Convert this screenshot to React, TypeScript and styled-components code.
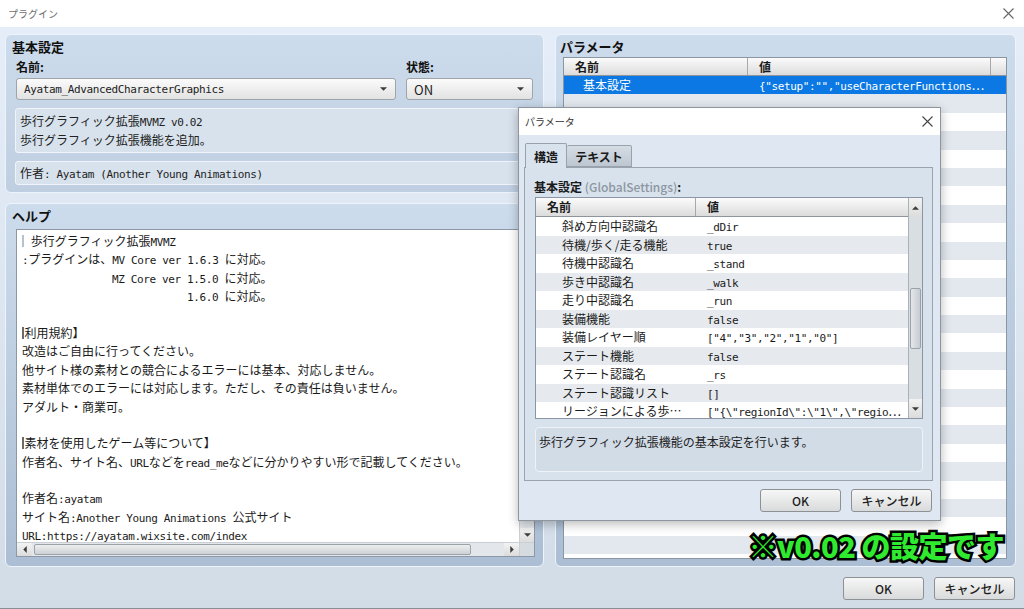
import React from "react";
import styled, { createGlobalStyle } from "styled-components";

const GlobalStyle = createGlobalStyle`
  html, body {
    margin: 0;
    padding: 0;
  }
  body {
    width: 1024px;
    height: 609px;
    overflow: hidden;
    font-family: "Noto Sans CJK JP", "Noto Sans", sans-serif;
    font-size: 12px;
    color: #1e1e1e;
  }
  * {
    box-sizing: border-box;
  }
`;

const Window = styled.div`
  position: relative;
  width: 1024px;
  height: 609px;
  display: flex;
  flex-direction: column;
  background: #fff;
  border-bottom: 1px solid #8a8f96;
`;

const TitleBar = styled.div`
  height: 27px;
  flex: none;
  display: flex;
  align-items: center;
  justify-content: space-between;
  padding: 0 10px 0 8px;
  background: #fff;
`;

const WinTitle = styled.span`
  font-size: 10px;
  color: #707070;
`;

const Body = styled.div`
  flex: 1;
  display: flex;
  flex-direction: column;
  padding: 7px 8px 0 5px;
  background: linear-gradient(180deg, #e5eef8 0%, #d2dce7 100%);
`;

const Columns = styled.div`
  height: 533px;
  display: grid;
  grid-template-columns: 539px 1fr;
  column-gap: 11px;
`;

const LeftCol = styled.div`
  display: flex;
  flex-direction: column;
  gap: 10px;
  min-height: 0;
`;

const Panel = styled.section<{ $grow?: boolean; $pad: string }>`
  position: relative;
  display: flex;
  flex-direction: column;
  min-height: 0;
  flex: ${(p) => (p.$grow ? "1" : "none")};
  padding: ${(p) => p.$pad};
  border: 1px solid #edf3fa;
  border-radius: 6px;
  background: linear-gradient(180deg, #cddcec 0%, ${(p) => (p.$grow ? "#abbed4" : "#bfcfe1")} 100%);
`;

const PanelTitle = styled.h2<{ $shift?: number }>`
  margin: 4px 0 0 ${(p) => p.$shift ?? 0}px;
  font-size: 13px;
  line-height: 16px;
  font-weight: 700;
  color: #111;
`;

const Fields = styled.div`
  display: grid;
  grid-template-columns: 380px 127px;
  column-gap: 10px;
  margin-top: 5px;
  padding-left: 1px;
`;

const Field = styled.div`
  display: flex;
  flex-direction: column;
  gap: 4px;
`;

const Label = styled.label`
  font-weight: 700;
  line-height: 14px;
  color: #111;
`;

const Select = styled.div`
  height: 22px;
  display: flex;
  align-items: center;
  justify-content: space-between;
  padding: 0 8px 0 7px;
  border: 1px solid #9ea4aa;
  border-radius: 3px;
  background: linear-gradient(180deg, #fbfbfb 0%, #e2e2e2 100%);
  font-size: 13px;
  color: #222;
  white-space: nowrap;
`;

const InfoBox = styled.div<{ $h: number }>`
  height: ${(p) => p.$h}px;
  margin-top: 8px;
  padding: 3px 4px;
  border: 1px solid #eef4fa;
  border-radius: 3px;
  background: #d8e2ed;
  line-height: 17px;
  color: #222;
  white-space: nowrap;
  overflow: hidden;
`;

const AuthorLine = styled.div`
  line-height: 16px;
`;

const Latin = styled.span`
  font-family: "DejaVu Sans Mono", "Liberation Mono", monospace;
  font-size: 11px;
  letter-spacing: -0.37px;
  white-space: pre;
`;

const Mixed = ({ text }: { text: string }) => {
  const parts = text.split(/([\x20-\x7e]+)/);
  return (
    <>
      {parts.map((p, i) => (i % 2 === 1 ? <Latin key={i}>{p}</Latin> : p))}
    </>
  );
};

/* ---------- help text area ---------- */

const TextArea = styled.div`
  flex: 1;
  margin-top: 5px;
  display: grid;
  grid-template-columns: 1fr 15px;
  grid-template-rows: 1fr 14px;
  border: 1px solid #8c98a5;
  min-height: 0;
`;

const TextContent = styled.div`
  background: #fff;
  padding: 2px 0 0 5px;
  overflow: hidden;
`;

const HelpLine = styled.div<{ $indent?: number }>`
  height: 18.4px;
  line-height: 18.4px;
  padding-left: ${(p) => p.$indent ?? 0}px;
  white-space: nowrap;
  color: #1a1a1a;
`;

const ClipMark = styled.span<{ $light?: boolean }>`
  display: inline-block;
  width: 1.5px;
  height: 12px;
  margin-right: 1px;
  vertical-align: -1px;
  background: ${(p) => (p.$light ? "#b6c2ce" : "#6a6a6a")};
`;

const VScroll = styled.div`
  display: flex;
  flex-direction: column;
  justify-content: space-between;
  background: #e3e7eb;
  border-left: 1px solid #c9cfd5;
`;

const HScroll = styled.div`
  display: flex;
  align-items: stretch;
  background: #e3e7eb;
  border-top: 1px solid #c9cfd5;
`;

const ScrollBtn = styled.div<{ $h?: number; $w?: number }>`
  flex: none;
  width: ${(p) => (p.$w ? `${p.$w}px` : "auto")};
  height: ${(p) => (p.$h ? `${p.$h}px` : "auto")};
  display: flex;
  align-items: center;
  justify-content: center;
  background: linear-gradient(180deg, #f3f3f3, #dcdcdc);
`;

const HThumb = styled.div`
  width: 437px;
  margin: 1px 0 1px 2px;
  border: 1px solid #9aa2aa;
  border-radius: 2px;
  background: linear-gradient(180deg, #eeeeee, #cdd1d5);
`;

const Spacer = styled.div`
  flex: 1;
`;

const Corner = styled.div`
  background: #d6dbe0;
  border-left: 1px solid #c9cfd5;
  border-top: 1px solid #c9cfd5;
`;

/* ---------- parameter list ---------- */

const ParamTable = styled.div`
  flex: 1;
  margin-top: 2px;
  border: 1px solid #8a96a2;
  background: #fff;
  overflow: hidden;
`;

const ParamRow = styled.div<{ $head?: boolean; $sel?: boolean; $alt?: boolean }>`
  display: grid;
  grid-template-columns: 184px 243px 1fr;
  height: ${(p) => (p.$head ? "18px" : "18.4px")};
  line-height: ${(p) => (p.$head ? "17px" : "18.4px")};
  background: ${(p) =>
    p.$head
      ? "linear-gradient(180deg, #fbfbfb 0%, #dcdcdc 100%)"
      : p.$sel
      ? "#0b78e3"
      : p.$alt
      ? "#e2e8ee"
      : "#fff"};
  color: ${(p) => (p.$sel ? "#fff" : "#1a1a1a")};
  border-bottom: ${(p) => (p.$head ? "1px solid #8d949b" : "none")};
  white-space: nowrap;
  overflow: hidden;
`;

const Cell = styled.div<{ $pad: number; $head?: boolean; $last?: boolean }>`
  padding-left: ${(p) => p.$pad}px;
  overflow: hidden;
  font-weight: ${(p) => (p.$head ? 700 : 400)};
  border-right: ${(p) => (p.$head && !p.$last ? "1px solid #a3a9af" : "none")};
`;

const Stamp = styled.div`
  position: absolute;
  right: 11px;
  bottom: 4px;
  font-size: 29px;
  line-height: 34px;
  font-weight: 900;
  letter-spacing: -0.5px;
  color: #30ea30;
  -webkit-text-stroke: 5px #000;
  paint-order: stroke fill;
  white-space: nowrap;
`;

/* ---------- footer & buttons ---------- */

const Footer = styled.div`
  display: flex;
  justify-content: flex-end;
  gap: 10px;
  padding: 10px 1px 0 0;
`;

const Button = styled.button`
  width: 81px;
  height: 23px;
  padding: 0;
  border: 1px solid #8e9194;
  border-radius: 3px;
  background: linear-gradient(180deg, #f7f7f7 0%, #d9dadb 100%);
  font-family: inherit;
  font-size: 12px;
  font-weight: 500;
  color: #1e1e1e;
`;

/* ---------- dialog ---------- */

const Dialog = styled.div`
  position: absolute;
  left: 518px;
  top: 107px;
  width: 423px;
  display: flex;
  flex-direction: column;
  background: #dfe8f2;
  border: 1px solid #8d959e;
  box-shadow: 0 3px 10px rgba(0, 0, 0, 0.28);
`;

const DialogTitle = styled.div`
  height: 27px;
  display: flex;
  align-items: center;
  justify-content: space-between;
  padding: 0 7px 0 6px;
  background: #fff;
  font-size: 10px;
  color: #333;
`;

const DialogBody = styled.div`
  padding: 8px 7px 8px 5px;
  display: flex;
  flex-direction: column;
`;

const TabRow = styled.div`
  display: flex;
  align-items: flex-end;
  padding-left: 1px;
  height: 24px;
  position: relative;
  z-index: 1;
`;

const Tab = styled.div<{ $active?: boolean }>`
  width: ${(p) => (p.$active ? "42px" : "65px")};
  height: ${(p) => (p.$active ? "25px" : "22px")};
  margin-bottom: ${(p) => (p.$active ? "-1px" : "0")};
  display: flex;
  align-items: center;
  justify-content: center;
  border: 1px solid #98a2ac;
  border-bottom: ${(p) => (p.$active ? "none" : "1px solid #98a2ac")};
  border-left: ${(p) => (p.$active ? "1px solid #98a2ac" : "none")};
  border-radius: 2px 2px 0 0;
  background: ${(p) => (p.$active ? "#d9e3ed" : "linear-gradient(180deg, #d5dce4 0%, #bec7d1 100%)")};
  font-weight: 700;
  font-size: 12px;
  color: #1a1a1a;
`;

const TabPanel = styled.div`
  display: flex;
  flex-direction: column;
  padding: 12px 9px 8px 10px;
  border: 1px solid #9aa4ae;
  background: #d8e2ec;
`;

const GroupLabel = styled.div`
  margin-left: -1px;
  font-weight: 700;
  line-height: 14px;
  color: #1a1a1a;
`;

const Hint = styled.span`
  color: #8c97a2;
  font-weight: 500;
`;

const DTable = styled.div`
  height: 222px;
  margin-top: 3px;
  display: flex;
  border: 1px solid #8a96a2;
  background: #fff;
`;

const DGrid = styled.div`
  flex: 1;
  overflow: hidden;
`;

const DRow = styled.div<{ $head?: boolean; $alt?: boolean }>`
  display: grid;
  grid-template-columns: 160px 1fr;
  height: ${(p) => (p.$head ? "19px" : "18.5px")};
  line-height: ${(p) => (p.$head ? "18px" : "18.5px")};
  background: ${(p) =>
    p.$head ? "linear-gradient(180deg, #fbfbfb 0%, #dcdcdc 100%)" : p.$alt ? "#e6eaee" : "#fff"};
  border-bottom: ${(p) => (p.$head ? "1px solid #8d949b" : "none")};
  white-space: nowrap;
  color: #1a1a1a;
`;

const DScroll = styled.div`
  width: 14px;
  display: flex;
  flex-direction: column;
  border-left: 1px solid #a9b1b9;
  background: #d9dee3;
`;

const DThumb = styled.div`
  height: 61px;
  margin: 71px 1px 0;
  border: 1px solid #9aa2aa;
  border-radius: 2px;
  background: linear-gradient(90deg, #e4e7ea, #c6ccd2);
`;

const DescBox = styled.div`
  height: 45px;
  margin-top: 8px;
  padding: 6px 3px;
  border: 1px solid #eef3f8;
  border-radius: 4px;
  background: #d2dce7;
  line-height: 16px;
  color: #222;
`;

const DialogButtons = styled.div`
  display: flex;
  justify-content: flex-end;
  gap: 10px;
  margin-top: 8px;
  padding-right: 1px;
`;

/* ---------- icons ---------- */

const CloseIcon = ({ color = "#555" }: { color?: string }) => (
  <svg width="11" height="11" viewBox="0 0 11 11">
    <path d="M0.5 0.5 L10.5 10.5 M10.5 0.5 L0.5 10.5" stroke={color} strokeWidth="1.1" fill="none" />
  </svg>
);

const Tri = ({ dir, color = "#3c3c3c" }: { dir: "up" | "down" | "left" | "right"; color?: string }) => {
  const vertical = dir === "up" || dir === "down";
  const pts = {
    down: "0,0 7,0 3.5,3.5",
    up: "0,3.5 7,3.5 3.5,0",
    left: "3.5,0 3.5,7 0,3.5",
    right: "0,0 0,7 3.5,3.5",
  }[dir];
  return (
    <svg width={vertical ? 7 : 4} height={vertical ? 4 : 7} viewBox={vertical ? "0 0 7 3.5" : "0 0 3.5 7"}>
      <polygon points={pts} fill={color} />
    </svg>
  );
};

/* ---------- data ---------- */

type HelpItem = { text: string; indent?: number; mark?: "light" | "dark" };

const helpLines: HelpItem[] = [
  { text: " 歩行グラフィック拡張MVMZ", mark: "light" },
  { text: ":プラグインは、MV Core ver 1.6.3 に対応。" },
  { text: "MZ Core ver 1.5.0 に対応。", indent: 90 },
  { text: "1.6.0 に対応。", indent: 165 },
  { text: "" },
  { text: "利用規約】", mark: "dark" },
  { text: "改造はご自由に行ってください。" },
  { text: "他サイト様の素材との競合によるエラーには基本、対応しません。" },
  { text: "素材単体でのエラーには対応します。ただし、その責任は負いません。" },
  { text: "アダルト・商業可。" },
  { text: "" },
  { text: "素材を使用したゲーム等について】", mark: "dark" },
  { text: "作者名、サイト名、URLなどをread_meなどに分かりやすい形で記載してください。" },
  { text: "" },
  { text: "作者名:ayatam" },
  { text: "サイト名:Another Young Animations 公式サイト" },
  { text: "URL:https://ayatam.wixsite.com/index" },
];

const settings: [string, string][] = [
  ["斜め方向中認識名", "_dDir"],
  ["待機/歩く/走る機能", "true"],
  ["待機中認識名", "_stand"],
  ["歩き中認識名", "_walk"],
  ["走り中認識名", "_run"],
  ["装備機能", "false"],
  ["装備レイヤー順", '["4","3","2","1","0"]'],
  ["ステート機能", "false"],
  ["ステート認識名", "_rs"],
  ["ステート認識リスト", "[]"],
  ["リージョンによる歩⋯", '["{\\"regionId\\":\\"1\\",\\"regio⋯'],
];

const emptyRows = Array.from({ length: 26 }, (_, i) => i + 1);

const App = () => {
  return (
    <>
      <GlobalStyle />
      <Window>
        <TitleBar>
          <WinTitle>プラグイン</WinTitle>
          <CloseIcon color="#666" />
        </TitleBar>
        <Body>
          <Columns>
            <LeftCol>
              <Panel $pad="0 10px 7px 9px">
                <PanelTitle $shift={-3}>基本設定</PanelTitle>
                <Fields>
                  <Field>
                    <Label>名前:</Label>
                    <Select>
                      <Mixed text="Ayatam_AdvancedCharacterGraphics" />
                      <Tri dir="down" />
                    </Select>
                  </Field>
                  <Field>
                    <Label>状態:</Label>
                    <Select>
                      ON
                      <Tri dir="down" />
                    </Select>
                  </Field>
                </Fields>
                <InfoBox $h={45}>
                  <div>
                    <Mixed text="歩行グラフィック拡張MVMZ v0.02" />
                  </div>
                  <div>歩行グラフィック拡張機能を追加。</div>
                </InfoBox>
                <InfoBox $h={24}>
                  <AuthorLine>
                    <Mixed text="作者: Ayatam (Another Young Animations)" />
                  </AuthorLine>
                </InfoBox>
              </Panel>

              <Panel $grow $pad="0 8px 9px 10px">
                <PanelTitle $shift={-4}>ヘルプ</PanelTitle>
                <TextArea>
                  <TextContent>
                    {helpLines.map((l, i) => (
                      <HelpLine key={i} $indent={l.indent}>
                        {l.mark && <ClipMark $light={l.mark === "light"} />}
                        <Mixed text={l.text} />
                      </HelpLine>
                    ))}
                  </TextContent>
                  <VScroll>
                    <ScrollBtn $h={14}>
                      <Tri dir="up" />
                    </ScrollBtn>
                    <ScrollBtn $h={14}>
                      <Tri dir="down" />
                    </ScrollBtn>
                  </VScroll>
                  <HScroll>
                    <ScrollBtn $w={15}>
                      <Tri dir="left" />
                    </ScrollBtn>
                    <HThumb />
                    <Spacer />
                    <ScrollBtn $w={15}>
                      <Tri dir="right" />
                    </ScrollBtn>
                  </HScroll>
                  <Corner />
                </TextArea>
              </Panel>
            </LeftCol>

            <Panel $grow $pad="0 8px 7px 7px">
              <PanelTitle $shift={-3}>パラメータ</PanelTitle>
              <ParamTable>
                <ParamRow $head>
                  <Cell $head $pad={11}>名前</Cell>
                  <Cell $head $pad={11}>値</Cell>
                  <Cell $head $last $pad={0} />
                </ParamRow>
                <ParamRow $sel>
                  <Cell $pad={19}>基本設定</Cell>
                  <Cell $pad={11}>
                    <Mixed text={'{"setup":"","useCharacterFunctions⋯'} />
                  </Cell>
                  <Cell $pad={0} />
                </ParamRow>
                {emptyRows.map((n) => (
                  <ParamRow key={n} $alt={n % 2 === 1}>
                    <Cell $pad={0} />
                    <Cell $pad={0} />
                    <Cell $pad={0} />
                  </ParamRow>
                ))}
              </ParamTable>
              <Stamp>※v0.02 の設定です</Stamp>
            </Panel>
          </Columns>

          <Footer>
            <Button>OK</Button>
            <Button>キャンセル</Button>
          </Footer>
        </Body>

        <Dialog>
          <DialogTitle>
            <span>パラメータ</span>
            <CloseIcon color="#444" />
          </DialogTitle>
          <DialogBody>
            <TabRow>
              <Tab $active>構造</Tab>
              <Tab>テキスト</Tab>
            </TabRow>
            <TabPanel>
              <GroupLabel>
                基本設定 <Hint>(GlobalSettings)</Hint>:
              </GroupLabel>
              <DTable>
                <DGrid>
                  <DRow $head>
                    <Cell $head $pad={11}>名前</Cell>
                    <Cell $head $last $pad={11}>値</Cell>
                  </DRow>
                  {settings.map(([name, value], i) => (
                    <DRow key={name} $alt={i % 2 === 1}>
                      <Cell $pad={26}>{name}</Cell>
                      <Cell $pad={11}>
                        <Mixed text={value} />
                      </Cell>
                    </DRow>
                  ))}
                </DGrid>
                <DScroll>
                  <ScrollBtn $h={19}>
                    <Tri dir="up" />
                  </ScrollBtn>
                  <DThumb />
                  <Spacer />
                  <ScrollBtn $h={19}>
                    <Tri dir="down" />
                  </ScrollBtn>
                </DScroll>
              </DTable>
              <DescBox>歩行グラフィック拡張機能の基本設定を行います。</DescBox>
            </TabPanel>
            <DialogButtons>
              <Button>OK</Button>
              <Button>キャンセル</Button>
            </DialogButtons>
          </DialogBody>
        </Dialog>
      </Window>
    </>
  );
};

export default App;
